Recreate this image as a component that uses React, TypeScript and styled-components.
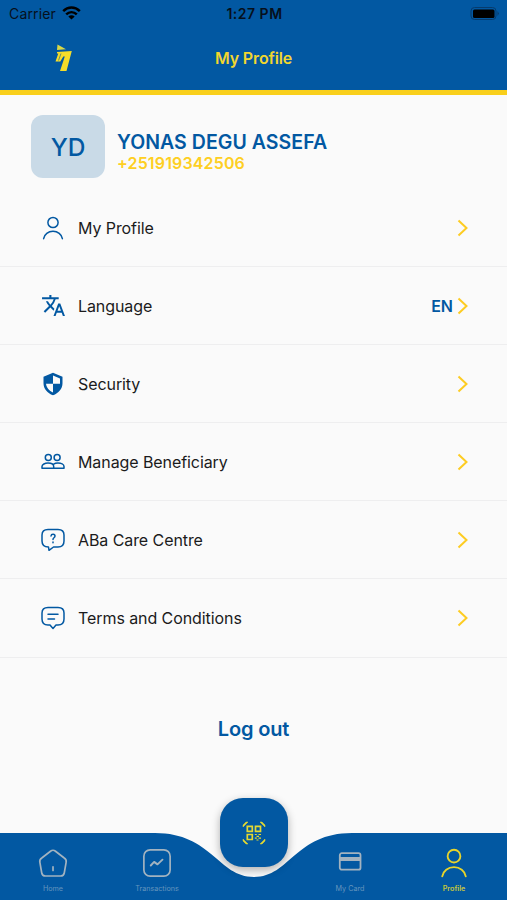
import React from "react";
import styled, { createGlobalStyle } from "styled-components";
import { MdTranslate } from "react-icons/md";

const blue = "#0258a2";
const yellow = "#f9cf1b";

const Global = createGlobalStyle`
  * { box-sizing: border-box; }
  body { margin: 0; background: #fafafa; font-family: Inter, sans-serif; }
`;

const Screen = styled.div`
  width: 507px;
  height: 900px;
  display: flex;
  flex-direction: column;
  background: #fafafa;
  overflow: hidden;
`;

const Header = styled.header`
  height: 95px;
  flex: none;
  background: ${blue};
  border-bottom: 5px solid ${yellow};
`;

const StatusBar = styled.div`
  height: 27px;
  padding: 0 7px 0 9px;
  display: grid;
  grid-template-columns: 1fr auto 1fr;
  align-items: center;
  color: #06101c;
  font-size: 14px;
`;

const Carrier = styled.div`
  display: flex;
  align-items: center;
  gap: 6px;
  letter-spacing: 0.15px;

  svg {
    margin-bottom: 1px;
  }
`;

const Clock = styled.div`
  font-weight: 600;
  letter-spacing: 0.5px;
`;

const Battery = styled.svg`
  justify-self: end;
`;

const TitleBar = styled.div`
  height: 62px;
  padding: 0 54px;
  display: grid;
  grid-template-columns: 1fr auto 1fr;
  align-items: center;
`;

const Title = styled.h1`
  margin: 0;
  font-size: 16px;
  font-weight: 600;
  letter-spacing: -0.15px;
  color: #f1d62f;
`;

const Account = styled.section`
  height: 94px;
  flex: none;
  padding: 20px 31px 0;
  display: flex;
  gap: 12px;
`;

const Avatar = styled.div`
  width: 74px;
  height: 63px;
  border-radius: 12px;
  background: #c9dae7;
  color: ${blue};
  font-size: 24.5px;
  font-weight: 550;
  display: flex;
  align-items: center;
  justify-content: center;
`;

const Identity = styled.div`
  padding-top: 15px;
`;

const Name = styled.div`
  font-size: 19.5px;
  line-height: 24px;
  font-weight: 560;
  letter-spacing: 0.05px;
  color: ${blue};
`;

const Phone = styled.div`
  font-size: 16px;
  line-height: 18px;
  font-weight: 600;
  letter-spacing: 0.15px;
  color: #fecf22;
`;

const Menu = styled.nav`
  display: flex;
  flex-direction: column;
`;

const Row = styled.div`
  height: 78.1px;
  padding: 0 38px 0 41px;
  display: flex;
  align-items: center;
  border-bottom: 1px solid #eeeeef;
  color: ${blue};
`;

const RowIcon = styled.span`
  width: 25px;
  height: 24px;
  margin-right: 12px;
  display: flex;
  align-items: center;
  justify-content: flex-start;
`;

const RowLabel = styled.span`
  flex: 1;
  font-size: 16px;
  letter-spacing: -0.08px;
  color: #1b1b1c;
`;

const RowValue = styled.span`
  font-size: 16px;
  font-weight: 600;
  margin-right: 4px;
`;

const Logout = styled.button`
  margin: 57px auto 0;
  padding: 0;
  border: 0;
  background: none;
  height: 28px;
  color: ${blue};
  font: 600 20px Inter, sans-serif;
  letter-spacing: -0.15px;
`;

const TabBar = styled.footer`
  position: relative;
  height: 104px;
  flex: none;
  margin-top: auto;
`;

const Wave = styled.svg`
  position: absolute;
  inset: 0;
`;

const ScanButton = styled.div`
  position: absolute;
  left: 220px;
  top: 2px;
  width: 68px;
  height: 69px;
  padding-right: 1px;
  border-radius: 23px;
  background: ${blue};
  box-shadow: 0 3px 8px rgba(0, 0, 0, 0.3);
  display: flex;
  align-items: center;
  justify-content: center;
`;

const Tabs = styled.div`
  position: relative;
  height: 100%;
  padding: 49px 4px 0 4px;
  display: grid;
  grid-template-columns: 98px 110px 83px 110px 98px;
`;

const Tab = styled.div<{ $active?: boolean }>`
  display: flex;
  flex-direction: column;
  align-items: center;
  color: ${(p) => (p.$active ? "#e8d42b" : "#a3b3c0")};
`;

const TabIcon = styled.span`
  height: 36px;
  margin-bottom: 4px;
  display: flex;
  align-items: center;
`;

const TabLabel = styled.span<{ $active?: boolean }>`
  font-size: 7.2px;
  line-height: 8px;
  font-weight: ${(p) => (p.$active ? 600 : 400)};
  color: ${(p) => (p.$active ? "#c6c73c" : "#6595bd")};
`;

const Line = ({ size = 24, width = 1.5, children }: { size?: number; width?: number; children: React.ReactNode }) => (
  <svg width={size} height={size} viewBox="0 0 24 24" fill="none" stroke="currentColor" strokeWidth={width} strokeLinecap="round" strokeLinejoin="round">
    {children}
  </svg>
);

const Wifi = () => (
  <svg width="19" height="14" viewBox="0 0 19 14" fill="none" stroke="#000" strokeWidth="2.5">
    <path d="M1.2 5.2C6 .4 13 .4 17.8 5.2" />
    <path d="M4.2 8.4c3.1-3 7.5-3 10.6 0" />
    <path d="M9.5 13.6 6.3 10.5c1.9-1.7 4.5-1.7 6.4 0Z" fill="#000" stroke="none" />
  </svg>
);

const Logo = () => (
  <svg width="19" height="29" viewBox="0 0 19 29">
    <path d="M3.5 .5 12 5.2 3 6Z" fill="#d8d848" />
    <path d="M3 8 17.8 7 12.5 27H6L10.8 12.5H9.3L6.3 17.5H1.5L4.3 9.5H3Z" fill="#f5dd2a" />
    <path d="m7 9.5-2.5 7" stroke={blue} strokeWidth=".6" />
  </svg>
);

const Person = ({ size = 24, width = 1.5 }: { size?: number; width?: number }) => (
  <Line size={size} width={width}>
    <circle cx="12" cy="6.5" r="5.1" />
    <path d="M2.6 22.7a9.5 8.6 0 0 1 18.8 0" />
  </Line>
);

const Shield = () => (
  <svg width="24" height="24" viewBox="0 0 24 24" fill="currentColor">
    <path fillRule="evenodd" d="M12 .8 2.5 4.7v6.5c0 5.4 4 10.1 9.5 12 5.5-1.9 9.5-6.6 9.5-12V4.7ZM12 3.5l7 2.9v5.3h-7Zm0 8.2v8.8c-3.8-1.6-6.5-4.9-7-8.8Z" />
  </svg>
);

const People = () => (
  <Line>
    <circle cx="7.3" cy="7.4" r="3" />
    <circle cx="16.1" cy="7.4" r="3" />
    <path d="M1 18.3v-1.7c0-2.2 3-3.5 6-3.5s5.7 1.3 5.7 3.5v1.7ZM12.7 14.1c1-.7 2.5-1 4.3-1 3 0 6 1.3 6 3.5v1.7H12.7" />
  </Line>
);

const HelpBubble = () => (
  <Line>
    <path d="M7 1.5h10c4 0 6 1.7 6 5.5v6c0 4-2 6-6 6h-4.5L8 22.3l-.5-3.3C3 19 1 17 1 13V7c0-3.8 2-5.5 6-5.5Z" />
    <path d="M10 8c.3-2.3 4-2.1 4 .1 0 1.8-2 1.5-2 3.3M12 14v.7" />
  </Line>
);

const NoteBubble = () => (
  <Line>
    <path d="M7 1.5h10c4 0 6 1.7 6 5.5v6c0 4-2 6-6 6h-2l-3 3.5L9 19H7c-4 0-6-2-6-6V7c0-3.8 2-5.5 6-5.5Z" />
    <path d="M7 8.3h10M7 13h6.5" />
  </Line>
);

const Chevron = () => (
  <svg width="12" height="18" viewBox="0 0 12 18" fill="none" stroke="#fdcc22" strokeWidth="2">
    <path d="m1.5 1.5 8 7.5-8 7.5" />
  </svg>
);

const HomeIcon = () => (
  <Line size={30} width={1.35}>
    <path d="M10 2.6Q12 1 14 2.6L21 8Q23 9.3 22.5 11.5L21 20Q20.6 22.4 18 22.4H6Q3.4 22.4 3 20L1.5 11.5Q1 9.3 3 8Z" />
    <path d="M12 15v3" />
  </Line>
);

const TransactionsIcon = () => (
  <Line size={30} width={1.35}>
    <rect x="1.5" y="1.5" width="21" height="21" rx="5" />
    <path d="m7 14 2.7-2.9 2.7 2 4-3.8" strokeWidth="1.5" />
  </Line>
);

const CardIcon = () => (
  <svg width="24" height="24" viewBox="0 0 24 24" fill="none" stroke="currentColor" strokeWidth="1.8">
    <rect x="1.8" y="2.2" width="20.7" height="16.5" rx="2" />
    <path d="M1.8 8h20.7" strokeWidth="4" />
  </svg>
);

const QrIcon = () => (
  <svg width="24" height="24" viewBox="0 0 24 24" fill="none" stroke="#e3d832" strokeWidth="1.7">
    <path d="M1 6V4L4 1h2ZM18 1h2l3 3v2ZM1 18v2l3 3h2ZM18 23h2l3-3v-2Z" fill="#e3d832" strokeWidth=".5" />
    <path d="M5.3 5.3h5v5h-5ZM13.5 5.3h5v5h-5ZM5.3 13.5h5v5h-5Z" />
    <path d="M12.8 13.5h2M16.5 13.5H19M14.5 15.3H17M12.8 17.2h2M16.5 17.2H19M14.5 19h2" strokeWidth="1.2" />
  </svg>
);

const items = [
  { label: "My Profile", icon: <Person /> },
  { label: "Language", icon: <MdTranslate size={25} />, value: "EN" },
  { label: "Security", icon: <Shield /> },
  { label: "Manage Beneficiary", icon: <People /> },
  { label: "ABa Care Centre", icon: <HelpBubble /> },
  { label: "Terms and Conditions", icon: <NoteBubble /> },
];

export default function App() {
  return (
    <Screen>
      <Global />
      <Header>
        <StatusBar>
          <Carrier>Carrier <Wifi /></Carrier>
          <Clock>1:27 PM</Clock>
          <Battery width="30" height="15" viewBox="0 0 30 15">
            <rect x="1" y="1.5" width="25" height="12" rx="3.5" fill="none" stroke="#063b6d" />
            <rect x="3" y="3.5" width="21.5" height="8.5" rx="1.5" />
            <path d="M27.5 5v5l1.5-2.5Z" fill="#063b6d" />
          </Battery>
        </StatusBar>
        <TitleBar><Logo /><Title>My Profile</Title></TitleBar>
      </Header>
      <Account>
        <Avatar>YD</Avatar>
        <Identity>
          <Name>YONAS DEGU ASSEFA</Name>
          <Phone>+251919342506</Phone>
        </Identity>
      </Account>
      <Menu>
        {items.map((item) => (
          <Row key={item.label}>
            <RowIcon>{item.icon}</RowIcon>
            <RowLabel>{item.label}</RowLabel>
            {item.value && <RowValue>{item.value}</RowValue>}
            <Chevron />
          </Row>
        ))}
      </Menu>
      <Logout>Log out</Logout>
      <TabBar>
        <Wave width="507" height="104" viewBox="0 0 507 104">
          <path d="M0 37H155C212 37 218 81 254 81S295 37 352 37H507V104H0Z" fill={blue} />
        </Wave>
        <Tabs>
          <Tab><TabIcon><HomeIcon /></TabIcon><TabLabel>Home</TabLabel></Tab>
          <Tab><TabIcon><TransactionsIcon /></TabIcon><TabLabel>Transactions</TabLabel></Tab>
          <span />
          <Tab><TabIcon><CardIcon /></TabIcon><TabLabel>My Card</TabLabel></Tab>
          <Tab $active><TabIcon><Person size={30} width={1.5} /></TabIcon><TabLabel $active>Profile</TabLabel></Tab>
        </Tabs>
        <ScanButton><QrIcon /></ScanButton>
      </TabBar>
    </Screen>
  );
}
